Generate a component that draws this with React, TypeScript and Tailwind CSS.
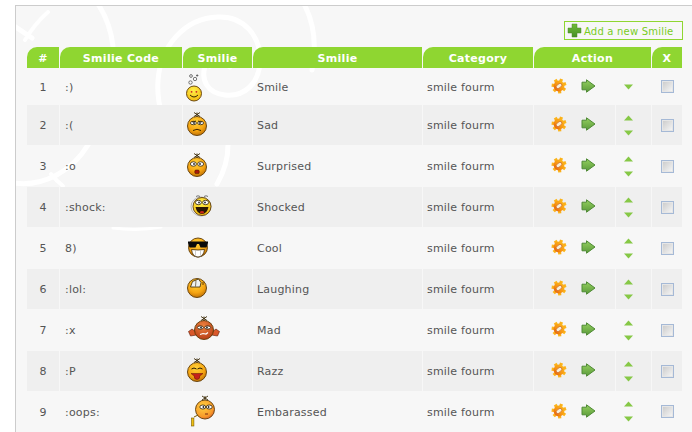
const rows = [
  { n: 1, code: ":)", name: "Smile", h: "h-[37px]", face: "smile", first: true, pad: "pt-[4px]" },
  { n: 2, code: ":(", name: "Sad", h: "h-[40px]", face: "sad", pad: "pt-[2px]" },
  { n: 3, code: ":o", name: "Surprised", h: "h-[42px]", face: "surprised", pad: "pt-[2px]" },
  { n: 4, code: ":shock:", name: "Shocked", h: "h-[40px]", face: "shocked", pad: "pt-[2px]" },
  { n: 5, code: "8)", name: "Cool", h: "h-[42px]", face: "cool", pad: "pt-[2px]" },
  { n: 6, code: ":lol:", name: "Laughing", h: "h-[40px]", face: "laughing", pad: "pt-[2px]" },
  { n: 7, code: ":x", name: "Mad", h: "h-[42px]", face: "mad", pad: "pt-[2px]" },
  { n: 8, code: ":P", name: "Razz", h: "h-[40px]", face: "razz", pad: "pt-[2px]" },
  { n: 9, code: ":oops:", name: "Embarassed", h: "h-[41px]", face: "oops", pad: "pt-[3px]" },
]

const gridCols = "grid grid-cols-[32px_122px_69px_169px_110px_81px_35px_30px] gap-x-px"

function Ball({ cx, cy, r = 9.5, fill = "url(#ballOrange)" }: { cx: number; cy: number; r?: number; fill?: string }) {
  return <circle cx={cx} cy={cy} r={r} fill={fill} stroke="#5d3a05" strokeWidth="0.9" />
}

function Hair({ cx, cy }: { cx: number; cy: number }) {
  return <path d={`M${cx - 3} ${cy - 4}L${cx + 3} ${cy}M${cx + 3} ${cy - 4}L${cx - 3} ${cy}M${cx} ${cy - 4}V${cy}`} stroke="#3b2a08" strokeWidth="0.9" fill="none" />
}

function Eyes({ cx, cy, gap = 4, rx = 3, ry = 2.2 }: { cx: number; cy: number; gap?: number; rx?: number; ry?: number }) {
  return (
    <g>
      <ellipse cx={cx - gap} cy={cy} rx={rx} ry={ry} fill="#fff" stroke="#2a1a00" strokeWidth="0.8" />
      <ellipse cx={cx + gap} cy={cy} rx={rx} ry={ry} fill="#fff" stroke="#2a1a00" strokeWidth="0.8" />
      <circle cx={cx - gap + 0.6} cy={cy} r="0.9" fill="#222" />
      <circle cx={cx + gap - 0.6} cy={cy} r="0.9" fill="#222" />
    </g>
  )
}

// svg box starts 3px into the cell, the face positions are tuned per smilie
function Smiley({ kind }: { kind: string }) {
  let body = null
  if (kind === "smile") {
    body = (
      <g>
        <Ball cx={8} cy={24.5} r={7.5} fill="url(#ballYellow)" />
        <circle cx="5.6" cy="22.8" r="0.9" fill="#c22" />
        <circle cx="10.4" cy="22.8" r="0.9" fill="#c22" />
        <path d="M4 26q4 4 8 0" stroke="#3a2a00" strokeWidth="1" fill="none" />
        <circle cx="4.5" cy="13.5" r="1.7" fill="none" stroke="#444" strokeWidth="0.7" />
        <circle cx="9" cy="10" r="1.7" fill="none" stroke="#444" strokeWidth="0.7" />
        <circle cx="5" cy="7" r="1.4" fill="none" stroke="#444" strokeWidth="0.7" />
        <path d="M10 6.5h2.4M11.2 5.3v2.4" stroke="#444" strokeWidth="0.7" />
      </g>
    )
  }
  if (kind === "sad") {
    body = (
      <g>
        <Ball cx={11} cy={19} />
        <Hair cx={11} cy={9.5} />
        <Eyes cx={11} cy={16} gap={3.6} ry={1.7} />
        <path d="M6 15l4 -1M16 15l-4 -1" stroke="#3a2400" strokeWidth="0.8" />
        <path d="M7 23.5q4 -2.4 8 0" stroke="#3a2400" strokeWidth="1" fill="none" />
      </g>
    )
  }
  if (kind === "surprised") {
    body = (
      <g>
        <Ball cx={11} cy={19} />
        <Hair cx={11} cy={9.5} />
        <Eyes cx={11} cy={16} gap={3.6} />
        <rect x="8.8" y="22" width="4.4" height="3.6" rx="1.2" fill="#a81a0a" stroke="#3a1400" strokeWidth="0.5" />
      </g>
    )
  }
  if (kind === "shocked") {
    body = (
      <g>
        <ellipse cx="15" cy="17.5" rx="10" ry="9.5" fill="none" stroke="#aaa" strokeWidth="0.8" />
        <Ball cx={16} cy={17.5} r={9} fill="url(#ballYellow)" />
        <path d="M10 7.5q2 -1.5 4 0M18 7.5q2 -1.5 4 0" stroke="#555" strokeWidth="0.8" fill="none" />
        <Eyes cx={16} cy={13.5} gap={3.6} />
        <path d="M9.5 18h13q-1.5 7 -6.5 7t-6.5 -7z" fill="#2a1600" />
        <ellipse cx="16" cy="23.2" rx="2" ry="1.2" fill="#c8261a" />
      </g>
    )
  }
  if (kind === "cool") {
    body = (
      <g>
        <Ball cx={12} cy={17.5} />
        <path d="M2 11.5h20v1.5l-1.5 4.5h-6l-1.5 -3.5h-2l-1.5 3.5h-6l-1.5 -4.5z" fill="#0a0a0a" />
        <path d="M5.5 19.5q6.5 1 13 0q-1 7.5 -6.5 7.5t-6.5 -7.5z" fill="#fff" stroke="#3a2400" strokeWidth="0.8" />
        <path d="M9.5 20.5v6M14.5 20.5v6" stroke="#999" strokeWidth="0.5" />
      </g>
    )
  }
  if (kind === "laughing") {
    body = (
      <g>
        <Ball cx={11} cy={17} />
        <path d="M4.5 16l2 -5.5 6 -2.5 2.5 3.5 -1 4.5z" fill="#eef2f2" stroke="#3a2400" strokeWidth="0.8" />
        <path d="M10 9.5l-.5 6" stroke="#3a2400" strokeWidth="0.6" />
        <path d="M17 11v3" stroke="#3a2400" strokeWidth="0.8" />
      </g>
    )
  }
  if (kind === "mad") {
    body = (
      <g>
        <path d="M10 20l-4 -3-2 1.5-1.5 1 2 4.5 6 -1z" fill="#d9582a" stroke="#5a1a08" strokeWidth="0.6" />
        <path d="M26 20l4 -3 2 1.5 1.5 1-2 4.5-6 -1z" fill="#d9582a" stroke="#5a1a08" strokeWidth="0.6" />
        <Ball cx={18} cy={18} fill="url(#ballRed)" />
        <Hair cx={18} cy={8.5} />
        <Eyes cx={18} cy={15.5} gap={3.6} ry={1.6} />
        <path d="M14 22.5l3 -1 3 .5 2 -1.5" stroke="#fff" strokeWidth="1.2" fill="none" />
      </g>
    )
  }
  if (kind === "razz") {
    body = (
      <g>
        <Ball cx={11} cy={19} />
        <Hair cx={11} cy={9.5} />
        <path d="M5.5 16q2.5 -2 5 0M11.5 16q2.5 -2 5 0" stroke="#2a1a00" strokeWidth="1" fill="none" />
        <path d="M5 20.5h12q-2 2 -3 2q0 4 -3 4t-3 -4q-1 0 -3 -2z" fill="#c5201a" stroke="#5a1408" strokeWidth="0.5" />
      </g>
    )
  }
  if (kind === "oops") {
    body = (
      <g>
        <Ball cx={19} cy={15.5} fill="url(#ballBlush)" />
        <Hair cx={19} cy={6} />
        <Eyes cx={20} cy={13} gap={3.2} ry={2} />
        <path d="M19 20h3" stroke="#7a2a10" strokeWidth="1" />
        <rect x="5.5" y="24" width="2.4" height="8" fill="#f0c010" stroke="#7a5a00" strokeWidth="0.6" />
        <path d="M8 23l4 -2" stroke="#7a5a00" strokeWidth="1" />
      </g>
    )
  }
  return (
    <svg width="36" height="36" viewBox="0 0 36 36" className="ml-[3px]">
      {body}
    </svg>
  )
}

function Gear() {
  const teeth = [0, 51, 103, 154, 206, 257, 309]
  return (
    <svg width="16" height="16" viewBox="0 0 16 16" className="-mt-[2px]">
      {teeth.map((a) => (
        <rect key={a} x="6.4" y="0.6" width="3.2" height="3.4" fill="url(#gearFill)" transform={`rotate(${a + 20} 8 8)`} />
      ))}
      <circle cx="8" cy="8" r="5.4" fill="url(#gearFill)" />
      <ellipse cx="8" cy="8" rx="3.3" ry="1.9" fill="#f7f0d8" stroke="#c8500f" strokeWidth="0.6" transform="rotate(-40 8 8)" />
    </svg>
  )
}

function ArrowIcon() {
  return (
    <svg width="15" height="14" viewBox="0 0 15 14" className="-mt-[2px]">
      <path d="M1 3.2h4.5V.8L14 7l-8.500 6.200V10.800H1z" fill="url(#arrowFill)" stroke="#4f8a35" strokeWidth="1" strokeLinejoin="round" />
    </svg>
  )
}

function Tri({ up }: { up?: boolean }) {
  return (
    <svg width="9" height="6" viewBox="0 0 9 6">
      <path d={up ? "M4.5 0.5L9 5.5H0z" : "M0 0.5H9L4.5 5.5z"} fill="#86c846" />
    </svg>
  )
}

function CheckBox() {
  return <div className="w-[13px] h-[13px] border border-[#a5b9d6] bg-gradient-to-br from-[#c9c9c9] to-[#f8f8f8] shadow-[inset_0_0_0_1px_#e6e6e6]" />
}

function HeaderCell({ label, className = "" }: { label: string; className?: string }) {
  return (
    <div className={`h-[21px] pt-[4px] bg-[#8fd631] rounded-tl-[10px] flex items-center justify-center text-white font-bold text-[11px] tracking-[0.3px] ${className}`}>
      {label}
    </div>
  )
}

function SmilieRow({ row, grey }: { row: (typeof rows)[number]; grey: boolean }) {
  const cell = `flex items-center ${row.h} ${grey ? "bg-[#efefef]" : ""}`
  return (
    <div className={gridCols}>
      <div className={`${cell} ${row.pad} justify-center`}>{row.n}</div>
      <div className={`${cell} ${row.pad} pl-[5px]`}>{row.code}</div>
      <div className={cell}>
        <Smiley kind={row.face} />
      </div>
      <div className={`${cell} ${row.pad} pl-[4px]`}>{row.name}</div>
      <div className={`${cell} ${row.pad} pl-[4px]`}>smile fourm</div>
      <div className={`${cell} pl-[17px] gap-[14px]`}>
        <Gear />
        <ArrowIcon />
      </div>
      <div className={`${cell} flex-col justify-center gap-[9px] pr-[11px]`}>
        {!row.first && <Tri up />}
        <Tri />
      </div>
      <div className={`${cell} justify-center`}>
        <CheckBox />
      </div>
    </div>
  )
}

export default function App() {
  return (
    <div className="h-[432px] w-[692px] overflow-hidden bg-white pl-[15px] pt-[5px] font-['DejaVu_Sans',sans-serif] text-[11px] tracking-[0.2px] text-[#555]">
      <svg className="absolute w-0 h-0">
        <defs>
          <radialGradient id="ballOrange" cx="45%" cy="30%" r="75%">
            <stop offset="0" stopColor="#ffd23a" />
            <stop offset="0.6" stopColor="#f6a512" />
            <stop offset="1" stopColor="#b86a05" />
          </radialGradient>
          <radialGradient id="ballYellow" cx="45%" cy="30%" r="75%">
            <stop offset="0" stopColor="#fff04a" />
            <stop offset="1" stopColor="#f2b60c" />
          </radialGradient>
          <radialGradient id="ballRed" cx="45%" cy="30%" r="75%">
            <stop offset="0" stopColor="#ee8440" />
            <stop offset="1" stopColor="#b53a14" />
          </radialGradient>
          <radialGradient id="ballBlush" cx="40%" cy="35%" r="75%">
            <stop offset="0" stopColor="#ffd040" />
            <stop offset="0.7" stopColor="#f79a2a" />
            <stop offset="1" stopColor="#d9502a" />
          </radialGradient>
          <linearGradient id="gearFill" gradientUnits="userSpaceOnUse" x1="14" y1="2" x2="2" y2="14">
            <stop offset="0" stopColor="#ffc81f" />
            <stop offset="0.6" stopColor="#f58f12" />
            <stop offset="1" stopColor="#d9400f" />
          </linearGradient>
          <linearGradient id="arrowFill" x1="0" y1="0" x2="0" y2="1">
            <stop offset="0" stopColor="#94d05f" />
            <stop offset="1" stopColor="#5a9a3a" />
          </linearGradient>
          <linearGradient id="plusFill" x1="0" y1="0" x2="0" y2="1">
            <stop offset="0" stopColor="#6fbc36" />
            <stop offset="1" stopColor="#478f28" />
          </linearGradient>
        </defs>
      </svg>

      <div className="relative h-full border-t border-l border-[#cccccc] bg-[#f7f7f7] pl-[11px] pr-[10px] pt-[15px]">
        {/* background swirl, coordinates are page pixels */}
        <svg className="absolute left-0 top-0" width="676" height="426" viewBox="16 6 676 426" fill="none" stroke="#ffffff" strokeLinecap="round">
          <path d="M205 66c-4 14 2 27 20 29c20 2 34 -12 35 -33c1 -26 -16 -46 -42 -45c-34 1 -58 30 -60 64c-1 14 1 24 4 34" strokeWidth="5" />
          <path d="M210 66c6 -4 14 -4 20 1" strokeWidth="5" />
          <path d="M303 2c10 18 14 42 9 68" strokeWidth="5" />
          <path d="M228 145c0 14 -4 27 -11 39" strokeWidth="5" />
          <path d="M113 228c16 2 32 2 48 -1" strokeWidth="3" />
          <path d="M14 183c30 4 58 -12 74 -38" strokeWidth="5" />
          <path d="M51 174c4 5 8 9 12 12" strokeWidth="4" />
          <path d="M14 26c6 4 12 8 18 12" strokeWidth="5" />
          <path d="M25 40c6 -10 14 -20 23 -28" strokeWidth="4" />
          <path d="M98 4c8 12 13 26 15 42" strokeWidth="5" />
        </svg>

        <div className="relative">
          <div className="flex justify-end mb-[7px] -mr-px">
            <div className="h-[19px] w-[119px] border border-[#8fd631] flex items-center pl-[2px] gap-[2px] text-[10px] text-[#78cc1e]">
              <svg width="15" height="15" viewBox="0 0 15 15" className="shrink-0">
                <path d="M5 1h5v4h4v5h-4v4H5v-4H1V5h4z" fill="url(#plusFill)" stroke="#4d8a2a" strokeWidth="0.5" strokeLinejoin="round" />
              </svg>
              <span className="pt-[2px]">Add a new Smilie</span>
            </div>
          </div>

          <div className={gridCols}>
            <HeaderCell label="#" />
            <HeaderCell label="Smilie Code" />
            <HeaderCell label="Smilie" />
            <HeaderCell label="Smilie" />
            <HeaderCell label="Category" />
            <HeaderCell label="Action" className="col-span-2" />
            <HeaderCell label="X" />
          </div>

          {rows.map((row, i) => (
            <SmilieRow key={row.n} row={row} grey={i % 2 === 1} />
          ))}
        </div>
      </div>
    </div>
  )
}
